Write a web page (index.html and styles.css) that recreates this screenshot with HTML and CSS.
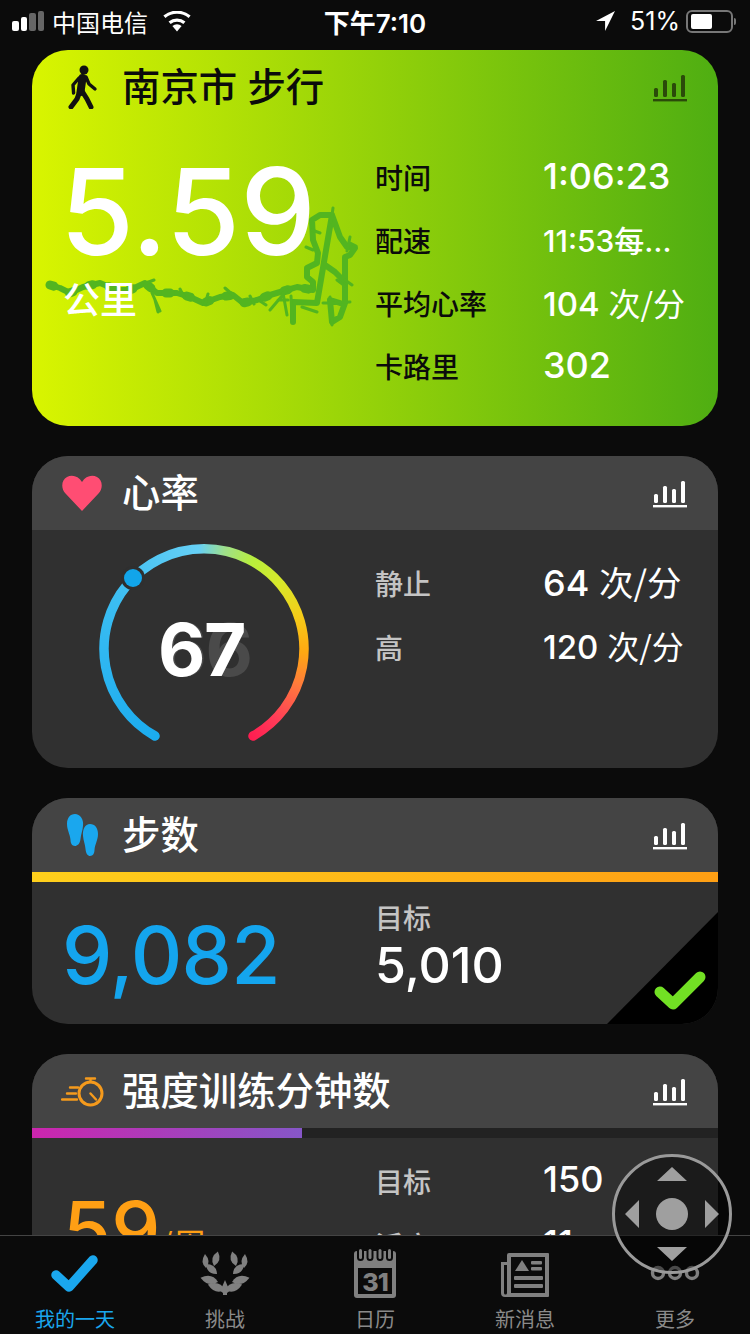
FILE: index.html
```html
<!DOCTYPE html>
<html lang="zh">
<head>
<meta charset="utf-8">
<title>我的一天</title>
<link rel="stylesheet" href="styles.css">
</head>
<body>
<svg class="defs" width="0" height="0">
  <symbol id="chart" viewBox="0 0 34 30">
    <rect x="1" y="16" width="4" height="9" rx="1.5"/>
    <rect x="10" y="8" width="4" height="17" rx="1.5"/>
    <rect x="19" y="11" width="4" height="14" rx="1.5"/>
    <rect x="28" y="3" width="4" height="22" rx="1.5"/>
    <rect x="0" y="27" width="34" height="2.4"/>
  </symbol>
  <symbol id="leaves" viewBox="0 0 50 50" overflow="visible">
    <g fill="#808080">
      <path d="M0 0Q7-7 0-15Q-7-7 0 0Z" transform="translate(14 18) rotate(15)"/>
      <path d="M0 0Q6-6 0-14Q-6-6 0 0Z" transform="translate(6 20) rotate(-4)"/>
      <path d="M0 0Q7-7 0-15Q-7-7 0 0Z" transform="translate(17 26) rotate(-48)"/>
      <path d="M0 0Q8-8 0-18Q-8-8 0 0Z" transform="translate(18 34) rotate(-76)"/>
      <path d="M0 0Q8-8 0-18Q-8-8 0 0Z" transform="translate(25 42) rotate(-72)"/>
      <path d="M25 32l3 7 4 2-5 4v2h-2Z"/>
    </g>
  </symbol>
</svg>
<div class="phone">
  <header class="status">
    <div class="status-side">
      <span class="signal"><i class="on s1"></i><i class="on s2"></i><i class="s3"></i><i class="s4"></i></span>
      <span class="carrier">中国电信</span>
      <svg class="wifi" width="28" height="21" viewBox="0 0 28 21"><path d="M14 20.500 9.400 15a7 7 0 0 1 9.200 0Z" fill="#fff"/><path d="M6.600 11.800a11.400 11.400 0 0 1 14.800 0" fill="none" stroke="#fff" stroke-width="3.200"/><path d="M1.400 5.800a19.600 19.600 0 0 1 25.200 0" fill="none" stroke="#fff" stroke-width="3.200"/></svg>
    </div>
    <div class="clock">下午7:10</div>
    <div class="status-side status-right">
      <svg width="19" height="20" viewBox="0 0 18 19"><path d="M18 0 0 9.500h8.600V19Z" fill="#fff"/></svg>
      <span class="pct">51%</span>
      <span class="battery"><b></b></span><span class="nub"></span>
    </div>
  </header>

  <main class="feed">
    <section class="card card-activity">
      <svg class="route" viewBox="32 50 686 376" width="686" height="376">
        <path class="r1" d="M50 285l10 3 10 5 13-6 17-4 17 7 13 0 15-7 12 10 20 0 13 4 13 6 17-6 13-2 10 8 14-3 13-5 17-5 10-3 16 3v-8l-6-5v-9l10-5 1-10-5-13-1-20 8-5h12l-15 88-24-1v20M332 215l8 22 7 10 8 1-5 7-5 2v46l-5 14-8 5-2-22 10 3M325 265l10 7 8 8"/>
        <path class="r3" d="M50 285l10 3 10 5 13-6 17-4 17 7 13 0 15-7 12 10 20 0 13 4 13 6 17-6 13-2 10 8 14-3 13-5 17-5 10-3 16 3"/>
        <path class="r2" d="M155 300l3 12M152 293l8 18M270 310l17-20M283 293l4 22M291 296l1 24M302 307l15 5M323 303l27-1M330 297l2 28M333 208l-2 14M350 237l-3 14M356 246l-6-3M320 233l-8-3M313 250l-7-3M337 280l8 6M250 296l4 8M180 289l4 8M205 304l3-10M233 295l-8-7M278 300l10 0M146 283l8-3M100 283l-8 3M260 301l6 4M345 280l7 5"/>
      </svg>
      <div class="head">
        <svg class="ico" width="36" height="44" viewBox="0 0 36 44"><circle cx="20" cy="5" r="4.500" fill="#111"/><g fill="none" stroke="#111" stroke-linecap="round" stroke-linejoin="round"><path d="M18.500 13 16.500 27" stroke-width="8"/><path d="M22 12l3 7 6 5M15 13l-6 7 .6 8" stroke-width="3.400"/><path d="M16 26l-3 8-6 8M18 26l5 8 4 8" stroke-width="5"/></g></svg>
        <h2 class="title">南京市 步行</h2>
        <svg class="chart" width="34" height="30"><use href="#chart"/></svg>
      </div>
      <div class="body">
        <div class="lead">
          <div class="big">5.59</div>
          <div class="unit">公里</div>
        </div>
        <div class="stats stats-dark">
          <span class="k">时间</span><span class="v">1:06:23</span>
          <span class="k">配速</span><span class="v v-small"><span class="clip">11:53每公里</span></span>
          <span class="k">平均心率</span><span class="v v-fit">104 <small>次/分</small></span>
          <span class="k">卡路里</span><span class="v">302</span>
        </div>
      </div>
    </section>

    <section class="card">
      <div class="head">
        <svg class="ico" width="40" height="36" viewBox="0 0 40 36"><path d="M20 36 3.500 18.500C-1.500 13-.5 5 5 2c5-2.600 11.500-1 15 5 3.500-6 10-7.600 15-5 5.500 3 6.500 11 1.500 16.500Z" fill="#ff4d73"/></svg>
        <h2 class="title">心率</h2>
        <svg class="chart" width="34" height="30"><use href="#chart"/></svg>
      </div>
      <div class="body body-hr">
        <div class="lead lead-gauge">
          <svg class="gauge" width="220" height="220" viewBox="0 0 220 220">
            <defs>
              <mask id="arc"><path d="M61 197A100 100 0 1 1 159 197" fill="none" stroke="#fff" stroke-width="9.500" stroke-linecap="round"/></mask>
            </defs>
            <g mask="url(#arc)"><foreignObject width="220" height="220"><div class="conic"></div></foreignObject></g>
            <circle cx="39" cy="39" r="12" fill="#2f2f2f"/>
            <circle cx="39" cy="39" r="9" fill="#12a5ea"/>
          </svg>
          <div class="ghost">66</div>
          <div class="hr-now">67</div>
        </div>
        <div class="stats stats-wide">
          <span class="k">静止</span><span class="v v-roomy">64 <small>次/分</small></span>
          <span class="k">高</span><span class="v v-fit">120 <small>次/分</small></span>
        </div>
      </div>
    </section>

    <section class="card">
      <div class="head">
        <svg class="ico" width="36" height="44" viewBox="0 0 36 44"><g fill="#1aa7ee"><path d="M11 1C16 1 20 6 19 13C18.500 18 17 21 16.500 26C16 31 13 33 11 33C8 33 6.500 30 6.500 27C6 21 3 17 3 11C3 5 6 1 11 1Z"/><path d="M26 11C21 11 18.500 16 19 23C19.500 28 21 31 21.500 36C22 41 24 43 26 43C29 43 30.500 40 30.500 37C31 31 34 27 34 21C34 15 31 11 26 11Z"/></g></svg>
        <h2 class="title">步数</h2>
        <svg class="chart" width="34" height="30"><use href="#chart"/></svg>
      </div>
      <div class="bar bar-gold"></div>
      <div class="body body-steps">
        <div class="lead"><div class="count count-blue">9,082</div></div>
        <div class="goal">
          <div class="goal-k">目标</div>
          <div class="goal-v">5,010</div>
        </div>
        <div class="corner"></div>
        <svg class="tick" width="52" height="42" viewBox="0 0 52 42"><path d="M6 22 19 34 46 7" fill="none" stroke="#72e024" stroke-width="11" stroke-linecap="round" stroke-linejoin="round"/></svg>
      </div>
    </section>

    <section class="card">
      <div class="head">
        <svg class="ico ico-wide" width="44" height="32" viewBox="0 0 44 32"><g fill="none" stroke="#f59a1c" stroke-width="2.400"><circle cx="29.500" cy="18.500" r="11.500" stroke-width="3"/><path d="M25 3.500h9M29.500 3.500v3.500M29.500 18.500l5.500 6M1 24.500h15M6 18.500h9M9 12.500h8" stroke-linecap="round"/></g></svg>
        <h2 class="title">强度训练分钟数</h2>
        <svg class="chart" width="34" height="30"><use href="#chart"/></svg>
      </div>
      <div class="bar bar-track"><div class="bar-fill"></div></div>
      <div class="body body-intensity">
        <div class="lead lead-intensity"><span class="count count-orange">59</span><span class="per">/周</span></div>
        <div class="stats stats-wide">
          <span class="k">目标</span><span class="v">150</span>
          <span class="k">活度</span><span class="v">11</span>
        </div>
      </div>
    </section>
  </main>

  <nav class="tabs">
    <div class="tab tab-active">
      <svg width="50" height="50" viewBox="0 0 50 50"><path d="M6 27 19 39 43 12" fill="none" stroke="#1aa7ee" stroke-width="9.500" stroke-linecap="round" stroke-linejoin="round"/></svg>
      <span>我的一天</span>
    </div>
    <div class="tab">
      <svg width="50" height="50" viewBox="0 0 50 50"><use href="#leaves"/><g transform="translate(50 0) scale(-1 1)"><use href="#leaves"/></g></svg>
      <span>挑战</span>
    </div>
    <div class="tab">
      <svg width="50" height="50" viewBox="0 0 50 50"><rect x="4" y="3" width="42" height="47" rx="3" fill="#808080"/><rect x="8" y="20" width="34" height="26" fill="#0b0b0b"/><g fill="#0b0b0b"><rect x="7" y="-2" width="7" height="15" rx="3.500"/><rect x="16.500" y="-2" width="7" height="15" rx="3.500"/><rect x="26.500" y="-2" width="7" height="15" rx="3.500"/><rect x="36" y="-2" width="7" height="15" rx="3.500"/></g><g fill="#808080"><rect x="9" y="1" width="3" height="10" rx="1.500"/><rect x="18.500" y="1" width="3" height="10" rx="1.500"/><rect x="28.500" y="1" width="3" height="10" rx="1.500"/><rect x="38" y="1" width="3" height="10" rx="1.500"/></g><text x="25" y="43" class="cal">31</text></svg>
      <span>日历</span>
    </div>
    <div class="tab">
      <svg width="50" height="50" viewBox="0 0 50 50"><path d="M9 5h39a1 1 0 0 1 1 1v42a1 1 0 0 1-1 1H5a4 4 0 0 1-4-4V14h6V7a2 2 0 0 1 2-2Z" fill="#808080"/><path d="M4 17h3v28a1.500 1.500 0 0 1-3 0Z" fill="#0b0b0b"/><rect x="11" y="9" width="34" height="36" fill="#0b0b0b"/><g fill="#808080"><path d="M22 12l7 11H15Z"/><rect x="31" y="13" width="11" height="3.500" rx="1"/><rect x="31" y="19" width="11" height="3.500" rx="1"/><rect x="14" y="28" width="29" height="4" rx="1"/><rect x="14" y="36" width="29" height="4" rx="1"/></g></svg>
      <span>新消息</span>
    </div>
    <div class="tab">
      <svg width="50" height="50" viewBox="0 0 50 50"><g fill="none" stroke="#808080" stroke-width="3.400"><circle cx="8" cy="25" r="5.500"/><circle cx="25" cy="25" r="5.500"/><circle cx="42" cy="25" r="5.500"/></g></svg>
      <span>更多</span>
    </div>
  </nav>

  <svg class="assist" width="122" height="122" viewBox="0 0 122 122">
    <circle cx="61" cy="61" r="58.500" fill="rgba(0,0,0,.42)" stroke="#9a9a9a" stroke-width="3"/>
    <g fill="#9f9f9f">
      <circle cx="61" cy="61" r="16"/>
      <path d="M61 14l15 14H46ZM61 108 46 94h30ZM14 61 28 47v28ZM108 61 94 47v28Z"/>
    </g>
  </svg>
</div>
</body>
</html>
```

FILE: styles.css
```css
* { box-sizing: border-box; }
html, body { margin: 0; padding: 0; background: #0b0b0b; }
body { font-family: Inter, "Noto Sans CJK SC", sans-serif; color: #fff; }
.defs { position: absolute; }
.phone { position: relative; width: 750px; height: 1334px; display: flex; flex-direction: column; overflow: hidden; background: #0b0b0b; }

/* status bar */
.status { height: 50px; flex: none; display: grid; grid-template-columns: 1fr auto 1fr; align-items: center; padding: 0 14px 8px 12px; }
.status-side { display: flex; align-items: center; }
.status-right { justify-content: flex-end; }
.signal { display: flex; align-items: flex-end; gap: 2px; width: 33px; height: 20px; }
.signal i { width: 6.500px; background: #666; border-radius: 2px; }
.signal .on { background: #fff; }
.s1 { height: 10px; } .s2 { height: 14px; } .s3 { height: 18px; } .s4 { height: 20px; }
.carrier { margin-left: 7px; font-size: 24px; }
.wifi { margin-left: 15px; }
.clock { font-size: 26px; font-weight: 600; margin-left: 2px; }
.pct { margin-left: 15px; font-size: 25px; }
.battery { margin-left: 6px; width: 47px; height: 23px; border: 2px solid #777; border-radius: 6px; padding: 2px 3px; display: block; }
.battery b { display: block; width: 21px; height: 15px; background: #fff; border-radius: 2px; }
.nub { width: 2px; height: 7px; background: #777; margin-left: 1px; border-radius: 0 2px 2px 0; }

/* feed */
.feed { flex: 1; min-height: 0; overflow: hidden; padding: 0 32px; display: flex; flex-direction: column; gap: 30px; }
.card { position: relative; flex: none; width: 686px; background: #303030; border-radius: 36px; overflow: hidden; }
.head { position: relative; height: 74px; display: flex; align-items: center; background: #444; padding: 0 31px 0 30px; }
.ico { width: 40px; flex: none; }
.ico-wide { width: 44px; margin-left: -1px; margin-right: -3px; }
.title { margin: 0 0 0 20px; flex: 1; font-size: 38.400px; font-weight: 500; line-height: 1; }
.chart { flex: none; fill: #fff; }
.body { display: flex; position: relative; }
.lead { width: 343px; flex: none; }
.k { font-size: 28px; font-weight: 500; color: #c4c4c4; }
.v { font-size: 36px; font-weight: 500; color: #fff; margin-bottom: 5px; }
.v small { font-size: 32px; font-family: "Noto Sans CJK SC", sans-serif; font-weight: 400; }
.v-fit { font-size: 33px; }
.v-roomy small { font-size: 34.500px; }
.stats { display: grid; grid-template-columns: 168px auto; grid-auto-rows: 63px; align-items: center; }
.stats-wide { grid-auto-rows: 64px; padding-top: 21px; }

/* activity card */
.card-activity { height: 376px; background: linear-gradient(90deg, #d9f500, #4fae12); }
.card-activity .head { background: none; color: #0e0e0e; }
.card-activity .chart { fill: #2b4a0a; }
.card-activity .title { color: #0b0b0b; }
.card-activity .lead { padding: 28px 0 0 32px; }
.big { font-size: 120px; line-height: 120px; font-weight: 500; margin-left: -4px; white-space: nowrap; }
.unit { font-size: 37px; line-height: 40px; margin: 9px 0 0 -1px; font-weight: 500; }
.stats-dark { padding-top: 21px; }
.stats-dark .k { color: #0b0b0b; }
.stats-dark .v { margin-bottom: 2px; }
.v-small { font-size: 30px; }
.clip { display: block; width: 130px; white-space: nowrap; overflow: hidden; text-overflow: ellipsis; }
.route { position: absolute; left: 0; top: 0; pointer-events: none; }
.route path { fill: none; stroke: #52b520; stroke-linejoin: round; stroke-linecap: round; }
.r1 { stroke-width: 6; }
.route .r3 { stroke-width: 9; stroke-dasharray: 4 17; }
.r2 { stroke-width: 3; }

/* heart rate */
.body-hr { height: 238px; }
.lead-gauge { position: relative; }
.gauge { position: absolute; left: 62px; top: 9px; }
.conic { width: 220px; height: 220px; background: conic-gradient(from 209deg, #1bacef 0deg, #3bbdf2 90deg, #66d0f6 148deg, #9fe08a 163deg, #b8ee3c 180deg, #d8e82a 200deg, #f5cc18 222deg, #ffa812 243deg, #ff7a3c 262deg, #ff3c58 285deg, #ff1a50 305deg, #1bacef 306deg); }
.ghost, .hr-now { position: absolute; left: 0; top: 84px; width: 344px; text-align: center; font-size: 73px; line-height: 72px; font-weight: 700; letter-spacing: -1.500px; text-indent: -5px; }
.ghost { color: rgba(255,255,255,.13); text-indent: 3px; }

/* bars */
.bar { height: 10px; }
.bar-gold { background: linear-gradient(90deg, #ffd01c, #ff9f14); }
.bar-track { background: #222; }
.bar-fill { width: 270px; height: 10px; background: linear-gradient(90deg, #cc25ae, #8656c8); }

/* steps */
.body-steps { height: 142px; }
.count { font-size: 80px; line-height: 1; font-weight: 500; }
.count-blue { color: #14a5ee; padding: 33px 0 0 30px; letter-spacing: -.8px; }
.goal-k { font-size: 28px; color: #c4c4c4; line-height: 36px; margin-top: 19px; font-weight: 500; }
.goal-v { font-size: 50px; line-height: 56px; font-weight: 500; }
.corner { position: absolute; right: 0; bottom: 0; width: 111px; height: 112px; background: #000; clip-path: polygon(100% 0, 100% 100%, 0 100%); }
.tick { position: absolute; right: 12px; bottom: 12px; }

/* intensity */
.body-intensity { height: 180px; }
.lead-intensity { padding: 53px 0 0 31px; }
.body-intensity .stats-wide { padding-top: 11px; }
.per { font-size: 34px; color: #ff9f14; margin-left: -1px; font-family: "Noto Sans CJK SC", sans-serif; }
.count-orange { font-size: 78px; color: #ff9f14; }

/* tabs */
.tabs { height: 99px; flex: none; display: grid; grid-template-columns: repeat(5, 150px); background: #0b0b0b; border-top: 1px solid #444; }
.tab { display: flex; flex-direction: column; align-items: center; padding-top: 12px; color: #8a8a8a; font-size: 20px; line-height: 24px; }
.tab svg { flex: none; overflow: visible; }
.tab span { margin-top: 10px; }
.tab-active { color: #1aa7ee; }
.cal { font: 800 25px Inter, sans-serif; letter-spacing: -1px; fill: #808080; text-anchor: middle; }

/* floating control */
.assist { position: absolute; left: 611px; top: 1153px; }
```
